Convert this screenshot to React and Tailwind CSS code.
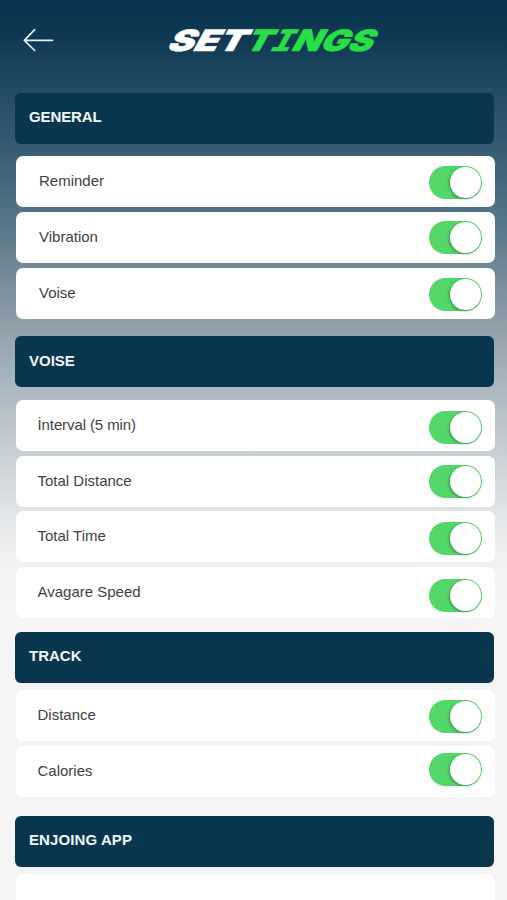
const sections = [
  {
    title: "GENERAL",
    header: "h-[51px] mb-[12px] tracking-[-0.1px]",
    gap: "mb-[17px]",
    spacing: "gap-[5px]",
    rows: [
      { label: "Reminder", inset: "pl-[23px]", toggle: "mt-[10px]" },
      { label: "Vibration", inset: "pl-[23px]", toggle: "mt-[9px]" },
      { label: "Voise", inset: "pl-[23px]", toggle: "mt-[10px]" },
    ],
  },
  {
    title: "VOISE",
    header: "h-[51px] mb-[13px] pt-[15px]",
    gap: "mb-[14px]",
    spacing: "gap-[4.67px]",
    rows: [
      { label: "İnterval (5 min)", inset: "pl-[21.5px] tracking-[-0.1px]", toggle: "mt-[11px]" },
      { label: "Total Distance", inset: "pl-[21.5px]", toggle: "mt-[9px]" },
      { label: "Total Time", inset: "pl-[21.5px]", toggle: "mt-[10.2px]" },
      { label: "Avagare Speed", inset: "pl-[21.5px]", toggle: "mt-[12px]" },
    ],
  },
  {
    title: "TRACK",
    header: "h-[51px] mb-[7px]",
    gap: "mb-[19px]",
    spacing: "gap-[5px]",
    rows: [
      { label: "Distance", inset: "pl-[21.5px]", toggle: "mt-[10px]" },
      { label: "Calories", inset: "pl-[21.5px]", toggle: "mt-[7px]" },
    ],
  },
  {
    title: "ENJOING APP",
    header: "h-[51px] mb-[7px] tracking-[0.1px]",
    gap: "",
    spacing: "",
    rows: [{ label: "", inset: "", toggle: null }],
  },
];

function Toggle({ offset }) {
  return (
    <button
      aria-label="Toggle"
      className={`flex h-[33px] w-[53px] justify-end rounded-full bg-[#53d769] p-px ${offset}`}
    >
      <span className="h-[31px] w-[31px] rounded-full bg-white shadow-[-1px_1px_3px_rgba(0,0,0,0.32)]" />
    </button>
  );
}

function Row({ label, inset, toggle }) {
  return (
    <div
      className={`ml-px flex h-[51px] w-[479px] shrink-0 items-start justify-between rounded-[7px] bg-white pr-[13px] ${inset}`}
    >
      <span className="pt-[15px] text-[15px] leading-5 text-[#414141]">{label}</span>
      {toggle && <Toggle offset={toggle} />}
    </div>
  );
}

function Title() {
  return (
    <svg width="250" height="60" viewBox="0 0 250 60" role="heading" aria-label="SETTINGS">
      <g
        transform="translate(15.5 41.4) skewX(-29)"
        fontFamily="Inter, 'Liberation Sans', sans-serif"
        fontWeight="900"
        fontSize="29.5"
        strokeWidth="0.5"
      >
        <text x="0" y="0" textLength="77" lengthAdjust="spacingAndGlyphs" fill="#fff" stroke="#fff">
          SET
        </text>
        <text x="77.5" y="0" textLength="127" lengthAdjust="spacingAndGlyphs" fill="#27e043" stroke="#27e043">
          T<tspan fontFamily="'DejaVu Sans Mono', monospace">I</tspan>NGS
        </text>
      </g>
    </svg>
  );
}

export default function App() {
  return (
    <main className="flex h-[900px] w-[507px] flex-col overflow-hidden bg-[linear-gradient(180deg,#06334d_0px,#103a54_40px,#204a63_85px,#365b72_145px,#507284_210px,#6d8795_265px,#8f9fa9_325px,#aebbc3_395px,#c8d0d5_455px,#e1e4e6_510px,#f0f1f1_560px,#f5f5f5_620px,#f4f4f4_900px)] font-['Liberation_Sans',Arial,sans-serif]">
      <header className="flex h-[93px] shrink-0 items-start pl-[22px] pt-[10px]">
        <svg className="mt-[15px]" width="34" height="30" viewBox="0 0 34 30" fill="none" stroke="#e8eef2" strokeWidth="1.7" strokeLinecap="round" strokeLinejoin="round">
          <path d="M30.5 15.3H2.3M12.7 4.6L2.3 15.3L12.7 25.5" />
        </svg>
        <div className="ml-[94px]">
          <Title />
        </div>
      </header>
      <div className="flex flex-col pl-[15px]">
        {sections.map((s) => (
          <section key={s.title} className={`flex flex-col ${s.gap}`}>
            <h2
              className={`w-[479px] shrink-0 rounded-[6px] bg-[#08364f] pl-[14px] pt-[14px] text-[15px] font-bold leading-5 text-[#f3f7fa] ${s.header}`}
            >
              {s.title}
            </h2>
            <div className={`flex flex-col ${s.spacing}`}>
              {s.rows.map((r) => (
                <Row key={r.label} {...r} />
              ))}
            </div>
          </section>
        ))}
      </div>
    </main>
  );
}
